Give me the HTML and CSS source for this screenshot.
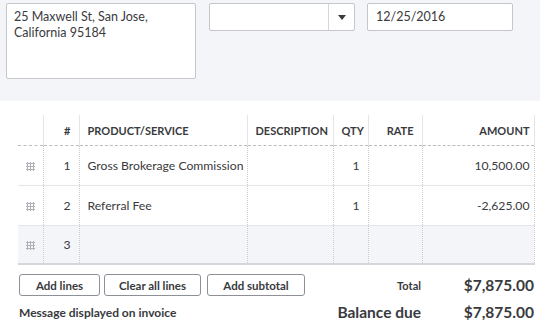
FILE: index.html
```html
<!DOCTYPE html>
<html lang="en">
<head>
    <meta charset="UTF-8">
    <title>Invoice lines</title>
    <link rel="stylesheet" href="styles.css">
</head>
<body>
    <div class="top">
        <div class="address">25 Maxwell St, San Jose,<br>California 95184</div>
        <div class="select">
            <span class="select-value"></span>
            <span class="select-arrow"><svg width="8" height="5" viewBox="0 0 8 5"><path d="M0 0h8L4 5z" fill="#393a3d"/></svg></span>
        </div>
        <div class="date">12/25/2016</div>
    </div>

    <table class="lines">
        <colgroup>
            <col style="width:25px"><col style="width:36px"><col style="width:168px"><col style="width:86px">
            <col style="width:35px"><col style="width:54px"><col style="width:112px">
        </colgroup>
        <thead>
            <tr>
                <th></th>
                <th class="num">#</th>
                <th class="left">PRODUCT/SERVICE</th>
                <th class="left">DESCRIPTION</th>
                <th class="num">QTY</th>
                <th class="num">RATE</th>
                <th class="num">AMOUNT</th>
            </tr>
        </thead>
        <tbody>
            <tr>
                <td class="drag"><span class="dots"></span></td>
                <td class="num">1</td>
                <td>Gross Brokerage Commission</td>
                <td></td>
                <td class="num">1</td>
                <td></td>
                <td class="num">10,500.00</td>
            </tr>
            <tr>
                <td class="drag"><span class="dots"></span></td>
                <td class="num">2</td>
                <td>Referral Fee</td>
                <td></td>
                <td class="num">1</td>
                <td></td>
                <td class="num">-2,625.00</td>
            </tr>
            <tr class="active">
                <td class="drag"><span class="dots"></span></td>
                <td class="num">3</td>
                <td></td>
                <td></td>
                <td></td>
                <td></td>
                <td></td>
            </tr>
        </tbody>
    </table>

    <div class="footer">
        <div class="footer-row">
            <div class="buttons">
                <button class="btn btn-add">Add lines</button>
                <button class="btn btn-clear">Clear all lines</button>
                <button class="btn btn-sub">Add subtotal</button>
            </div>
            <div class="sum">
                <span class="sum-label">Total</span>
                <span class="sum-value">$7,875.00</span>
            </div>
        </div>
        <div class="footer-row">
            <div class="message">Message displayed on invoice</div>
            <div class="sum">
                <span class="sum-label big">Balance due</span>
                <span class="sum-value">$7,875.00</span>
            </div>
        </div>
    </div>
</body>
</html>
```

FILE: styles.css
```css
body {
    margin: 0;
    font-family: Lato, "Open Sans", Arial, sans-serif;
    color: #393a3d;
    background-color: #fff;
}
.top {
    background-color: #f4f5f8;
    height: 101px;
    padding: 3px 0 0 6px;
    box-sizing: border-box;
    display: flex;
    align-items: flex-start;
}
.address {
    width: 190px;
    height: 76px;
    box-sizing: border-box;
    background: #fff;
    border: 1px solid #c4c6c9;
    border-radius: 2px;
    padding: 5px 7px;
    font-size: 12.5px;
    line-height: 16px;
}
.select {
    margin-left: 13px;
    width: 146px;
    height: 28px;
    box-sizing: border-box;
    background: #fff;
    border: 1px solid #c4c6c9;
    border-radius: 2px;
    display: flex;
}
.select-value {
    flex: 1;
}
.select-arrow {
    width: 25px;
    border-left: 1px solid #d4d7dc;
    display: flex;
    align-items: center;
    justify-content: center;
}
.date {
    margin-left: 12px;
    width: 146px;
    height: 28px;
    box-sizing: border-box;
    background: #fff;
    border: 1px solid #c4c6c9;
    border-radius: 2px;
    padding: 0 8px;
    font-size: 12.5px;
    line-height: 26px;
}
.lines {
    margin: 14px 0 0 18px;
    width: 516px;
    border-collapse: collapse;
    table-layout: fixed;
    font-size: 12.2px;
}
.lines th {
    height: 30px;
    padding: 0 8px;
    font-size: 11px;
    font-weight: 700;
    border-left: 1px solid #e3e5e8;
    border-bottom: 1px dashed #b9bcc0;
    white-space: nowrap;
}
.lines th:first-child {
    border-left: none;
}
.lines th:last-child {
    border-right: 1px solid #e3e5e8;
    padding-right: 4px;
}
.lines td {
    height: 39px;
    padding: 0 8px;
    border-left: 1px dotted #c9cbcf;
    border-bottom: 1px solid #e3e5e8;
    white-space: nowrap;
}
.lines td:first-child {
    border-left: none;
}
.lines td:last-child {
    border-right: 1px dotted #c9cbcf;
    padding-right: 4px;
}
.lines .num {
    text-align: right;
}
.lines .left {
    text-align: left;
}
.lines tr.active td {
    height: 37px;
    background-color: #f4f5f8;
    border-bottom: 2px solid #d4d7dc;
}
.drag {
    text-align: center;
}
.dots {
    display: inline-block;
    width: 9px;
    height: 9px;
    background-image: radial-gradient(circle, #aeb1b5 1px, transparent 1.2px);
    background-size: 3px 3px;
    vertical-align: middle;
}
.footer {
    padding: 9px 6px 0 19px;
}
.footer-row {
    display: flex;
    justify-content: space-between;
    align-items: center;
}
.buttons {
    display: flex;
    gap: 4px;
}
.btn {
    font-family: inherit;
    font-size: 11.5px;
    font-weight: 700;
    color: #393a3d;
    background: #fff;
    border: 1px solid #8d9096;
    border-radius: 3px;
    height: 22px;
    padding: 0;
}
.btn-add { width: 81px; }
.btn-clear { width: 97px; }
.btn-sub { width: 98px; margin-left: 2px; }
.sum {
    display: flex;
    align-items: center;
}
.sum-label {
    font-size: 11px;
    font-weight: 700;
    text-align: right;
}
.sum-label.big {
    font-size: 15.5px;
    font-weight: 700;
}
.sum-value {
    width: 113px;
    text-align: right;
    font-size: 15.5px;
    font-weight: 700;
}
.message {
    font-size: 12px;
    font-weight: 700;
}
.footer-row + .footer-row {
    margin-top: 7px;
}
```
